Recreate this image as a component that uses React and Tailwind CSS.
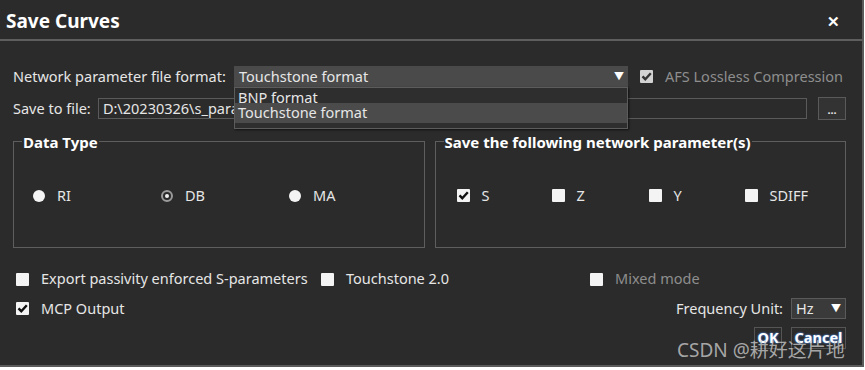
import React from "react";

function Box({ checked, tone = "white" }) {
  const bg = tone === "gray" ? "bg-[#d2d2d2]" : "bg-[#f4f4f4]";
  return (
    <span className={`flex h-[13px] w-[13px] shrink-0 items-center justify-center rounded-[1px] ${bg}`}>
      {checked && (
        <svg width="11" height="11" viewBox="0 0 11 11">
          <path d="M1.5 5.3 L4.3 8.2 L9.8 2.2" fill="none" stroke={tone === "gray" ? "#333" : "#111"} strokeWidth="2.4" />
        </svg>
      )}
    </span>
  );
}

function Check({ label, checked, disabled, tone, className = "" }) {
  return (
    <label className={`flex items-center gap-[12px] ${className}`}>
      <Box checked={checked} tone={tone} />
      <span className={disabled ? "text-[#8e8e8e]" : "text-[#e6e6e6]"}>{label}</span>
    </label>
  );
}

function Radio({ label, selected, className = "" }) {
  return (
    <label className={`flex items-center gap-[12px] ${className}`}>
      {selected ? (
        <span className="flex h-[12px] w-[12px] items-center justify-center rounded-full border-2 border-[#9a9a9a] bg-[#2b2b2b]">
          <span className="h-[4px] w-[4px] rounded-full bg-[#f0f0f0]" />
        </span>
      ) : (
        <span className="h-[12px] w-[12px] rounded-full bg-[#f4f4f4]" />
      )}
      <span>{label}</span>
    </label>
  );
}

function Group({ title, children }) {
  return (
    <fieldset className="h-[116px] w-[412px] border border-[#5e5e5e] px-[9px]">
      <legend className="relative top-[1px] ml-[-1px] px-[1px] text-[15px] font-bold leading-[18px] text-white">{title}</legend>
      {children}
    </fieldset>
  );
}

export default function App() {
  return (
    <div className="relative h-[367px] w-[864px] overflow-hidden border-r-2 border-b-2 border-[#5a5a5a] bg-[#2b2b2b] font-['Noto_Sans','Noto_Sans_CJK_SC',sans-serif] text-[14.5px] text-[#e6e6e6]">
      {/* title bar */}
      <div className="flex h-[41px] items-center justify-between border-b-2 border-[#5e5e5e] pl-[6px] pr-[22px] pt-[3px]">
        <span className="text-[19px] font-bold text-white">Save Curves</span>
        <span className="text-[15px] font-bold leading-none text-white">✕</span>
      </div>

      <div className="pl-[13px] pr-[16px]">
        {/* file format row */}
        <div className="mt-[25px] flex h-[21px] items-center">
          <span className="w-[221px]">Network parameter file format:</span>
          <div className="flex h-[21px] w-[394px] items-center justify-between bg-[#4a4a4a] pl-[5px] pr-[4px]">
            <span>Touchstone format</span>
            <span className="text-[10px] text-white">▼</span>
          </div>
          <Check className="ml-[12px]" label="AFS Lossless Compression" checked disabled tone="gray" />
        </div>

        {/* save to file row */}
        <div className="mt-[10px] flex h-[23px] items-center">
          <span className="w-[85px]">Save to file:</span>
          <div className="flex h-[21px] w-[710px] items-center overflow-hidden border border-[#5a5a5a] bg-[#2b2b2b] pl-[4px]">
            <span className="whitespace-nowrap">D:\20230326\s_parameters\Save_Curves\touchstone\result_data\curves.snp</span>
          </div>
          <div className="ml-[11px] flex h-[23px] w-[28px] items-end justify-center border border-[#5a5a5a] bg-[#333] pb-[4px] text-[11px] font-bold leading-none">
            ...
          </div>
        </div>

        {/* groups */}
        <div className="mt-[12px] flex gap-[10px]">
          <Group title="Data Type">
            <div className="mt-[35px] flex items-center">
              <Radio className="ml-[10px] w-[128px]" label="RI" />
              <Radio className="w-[128px]" label="DB" selected />
              <Radio label="MA" />
            </div>
          </Group>
          <Group title="Save the following network parameter(s)">
            <div className="mt-[35px] flex items-center">
              <Check className="ml-[12px] w-[95px]" label="S" checked />
              <Check className="w-[97px]" label="Z" />
              <Check className="w-[96px]" label="Y" />
              <Check label="SDIFF" />
            </div>
          </Group>
        </div>

        {/* options */}
        <div className="mt-[21px] flex h-[20px] items-center pl-[3px]">
          <Check className="w-[305px]" label="Export passivity enforced S-parameters" />
          <Check className="w-[269px]" label="Touchstone 2.0" />
          <Check label="Mixed mode" disabled />
        </div>
        <div className="mt-[9px] flex h-[21px] items-center justify-between pl-[3px]">
          <Check label="MCP Output" checked />
          <div className="flex items-center">
            <span className="mr-[8px]">Frequency Unit:</span>
            <div className="flex h-[21px] w-[55px] items-center justify-between border border-[#5a5a5a] bg-[#3a3a3a] pl-[4px] pr-[4px]">
              <span>Hz</span>
              <span className="text-[10px] text-white">▼</span>
            </div>
          </div>
        </div>
        <div className="mt-[8px] flex justify-end gap-[9px]">
          <div className="flex h-[22px] w-[28px] items-center justify-center border border-[#555] font-bold text-white [text-shadow:0_0_2px_#4a7fd0,0_0_2px_#4a7fd0]">
            OK
          </div>
          <div className="flex h-[22px] w-[55px] items-center justify-center border border-[#555] font-bold text-white [text-shadow:0_0_2px_#4a7fd0,0_0_2px_#4a7fd0]">
            Cancel
          </div>
        </div>
      </div>

      {/* open dropdown list */}
      <div className="absolute left-[234px] top-[87px] w-[394px] border border-[#5c5c5c] bg-[#2e2e2e] shadow-[1px_1px_2px_rgba(0,0,0,0.6)]">
        <div className="h-[15px] overflow-hidden pl-[3px] leading-[19px]">BNP format</div>
        <div className="flex h-[20px] items-center bg-[#4b4b4b] pl-[3px]">Touchstone format</div>
        <div className="h-[5px]" />
      </div>

      {/* watermark */}
      <div className="absolute left-[677px] top-[341px] text-[19px] leading-none text-[#c8c8c8]/80">CSDN @耕好这片地</div>
    </div>
  );
}
